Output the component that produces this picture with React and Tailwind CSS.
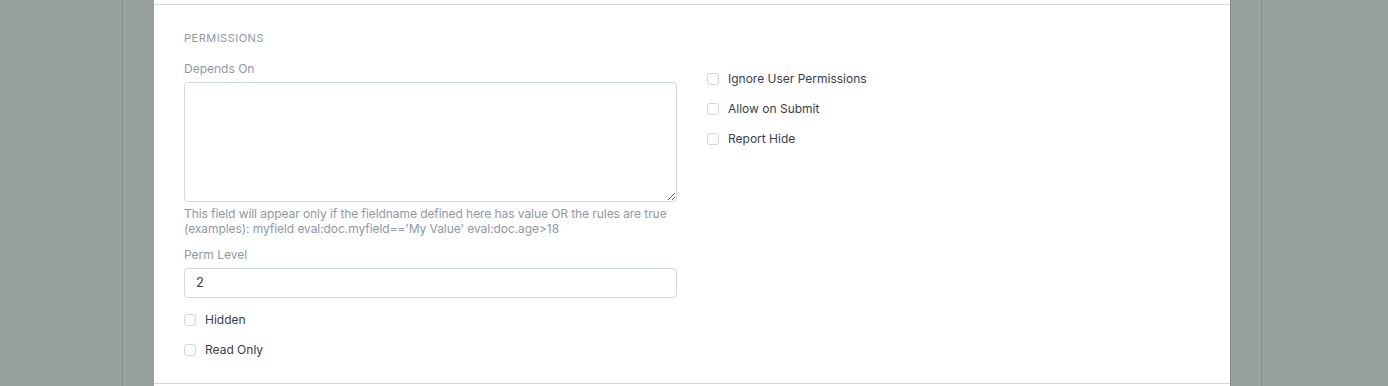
import React from "react";

function Check({ label }) {
  return (
    <div className="flex items-center h-[18px]">
      <span className="w-[12px] h-[12px] border border-[#d1d8dd] rounded-[3px] bg-white mr-[9px] shrink-0" />
      <span className="text-[12px] leading-[18px] text-[#36414c]">{label}</span>
    </div>
  );
}

export default function App() {
  return (
    <div
      className="flex w-full h-[386px] bg-[#979f9f] overflow-hidden"
      style={{ fontFamily: "Inter, 'Noto Sans', 'Liberation Sans', sans-serif" }}
    >
      <div className="w-[122px] shrink-0" />
      <div className="w-[32px] shrink-0 border-l border-[#858e8f]" />
      <div className="w-[1076px] shrink-0 bg-white flex flex-col">
        <div className="h-[4px]" />
        <div className="border-t border-b border-[#d1d8dd] h-[380px] px-[30px] pt-[25px]">
          <div className="text-[11px] leading-[16px] tracking-[0.5px] text-[#8d99a6] uppercase">
            Permissions
          </div>
          <div className="grid grid-cols-2 gap-x-[30px] mt-[14px]">
            <div className="flex flex-col">
              <label className="text-[12px] leading-[18px] text-[#8d99a6] mb-[4px]">Depends On</label>
              <textarea
                className="w-full h-[120px] border border-[#d1d8dd] rounded-[4px] resize-y outline-none bg-white"
                defaultValue=""
              />
              <p className="mt-[4px] text-[12px] leading-[15px] tracking-[-0.07px] text-[#8d99a6]">
                This field will appear only if the fieldname defined here has value OR the rules are true
                <br />
                (examples): myfield eval:doc.myfield=='My Value' eval:doc.age&gt;18
              </p>
              <label className="mt-[10px] text-[12px] leading-[18px] text-[#8d99a6] mb-[4px]">Perm Level</label>
              <div className="h-[30px] border border-[#d1d8dd] rounded-[4px] px-[11px] flex items-center text-[13px] text-[#36414c]">
                2
              </div>
              <div className="mt-[13px] flex flex-col gap-[12px]">
                <Check label="Hidden" />
                <Check label="Read Only" />
              </div>
            </div>
            <div className="flex flex-col gap-[12px] pt-[10px]">
              <Check label="Ignore User Permissions" />
              <Check label="Allow on Submit" />
              <Check label="Report Hide" />
            </div>
          </div>
        </div>
      </div>
      <div className="w-[31px] shrink-0 border-l border-[#858e8f]" />
      <div className="flex-1 border-l border-[#858e8f]" />
    </div>
  );
}
